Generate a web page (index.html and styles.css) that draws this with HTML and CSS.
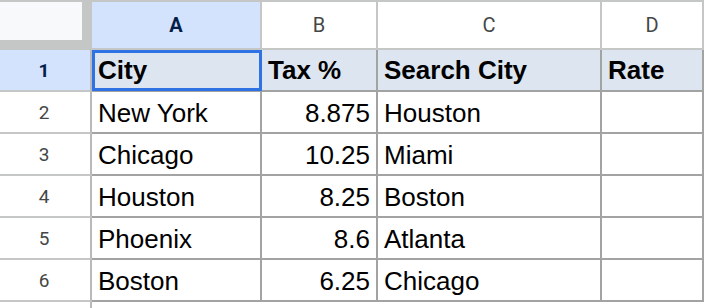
FILE: index.html
```html
<!DOCTYPE html>
<html>
<head>
<meta charset="utf-8">
<link rel="stylesheet" href="styles.css">
</head>
<body>
<div class="sheet">
  <div class="corner"><div class="corner-box"></div></div>
  <div class="col-h sel">A</div>
  <div class="col-h">B</div>
  <div class="col-h">C</div>
  <div class="col-h">D</div>

  <div class="row-h sel">1</div>
  <div class="cell head a1">City<div class="selection"></div></div>
  <div class="cell head">Tax %</div>
  <div class="cell head">Search City</div>
  <div class="cell head">Rate</div>

  <div class="row-h">2</div>
  <div class="cell">New York</div>
  <div class="cell num">8.875</div>
  <div class="cell">Houston</div>
  <div class="cell"></div>

  <div class="row-h">3</div>
  <div class="cell">Chicago</div>
  <div class="cell num">10.25</div>
  <div class="cell">Miami</div>
  <div class="cell"></div>

  <div class="row-h">4</div>
  <div class="cell">Houston</div>
  <div class="cell num">8.25</div>
  <div class="cell">Boston</div>
  <div class="cell"></div>

  <div class="row-h">5</div>
  <div class="cell">Phoenix</div>
  <div class="cell num">8.6</div>
  <div class="cell">Atlanta</div>
  <div class="cell"></div>

  <div class="row-h">6</div>
  <div class="cell">Boston</div>
  <div class="cell num">6.25</div>
  <div class="cell">Chicago</div>
  <div class="cell"></div>

  <div class="row-h tail"></div>
  <div class="blank"></div>
  <div class="blank"></div>
  <div class="blank"></div>
  <div class="blank"></div>
</div>
</body>
</html>
```

FILE: styles.css
```css
* { box-sizing: border-box; }
html, body { margin: 0; padding: 0; background: #ffffff; }
.sheet {
  width: 704px;
  height: 308px;
  overflow: hidden;
  display: grid;
  grid-template-columns: 92px 170px 116px 224px 102px;
  grid-template-rows: 50px repeat(6, 42px) 6px;
  font-family: "Liberation Sans", Arial, sans-serif;
}
.corner {
  background: #c4c7c5;
  padding-top: 2px;
}
.corner-box {
  width: 82px;
  height: 38px;
  background: #f8f9fa;
}
.col-h {
  border-top: 2px solid #c4c7c5;
  border-right: 2px solid #c4c7c5;
  border-bottom: 2px solid #c4c7c5;
  background: #ffffff;
  display: flex;
  align-items: center;
  justify-content: center;
  font-family: Roboto, "Liberation Sans", sans-serif;
  font-size: 20px;
  color: #444746;
}
.col-h.sel {
  background: #d3e3fd;
  color: #041e49;
  font-weight: bold;
}
.row-h {
  border-right: 2px solid #b8b9b8;
  border-bottom: 2px solid #c4c7c5;
  display: flex;
  align-items: center;
  justify-content: center;
  font-family: Roboto, "Liberation Sans", sans-serif;
  font-size: 19px;
  color: #444746;
  padding-right: 2px;
}
.row-h.sel {
  background: #d3e3fd;
  color: #041e49;
  font-weight: bold;
}
.row-h.tail { border-bottom: none; }
.cell {
  border-right: 2px solid #a3a3a3;
  border-bottom: 2px solid #a3a3a3;
  font-size: 26px;
  line-height: 38px;
  padding: 2px 6px 0 6px;
  color: #000000;
  white-space: nowrap;
  overflow: hidden;
}
.cell.head {
  background: #dde6f0;
  font-weight: bold;
  padding-top: 1px;
}
.cell.num { text-align: right; }
.a1 { position: relative; overflow: visible; }
.selection {
  position: absolute;
  left: 0;
  top: 0;
  right: -2px;
  height: 41px;
  border: 3px solid #2f72e4;
  pointer-events: none;
}
.blank { background: #ffffff; }
```
